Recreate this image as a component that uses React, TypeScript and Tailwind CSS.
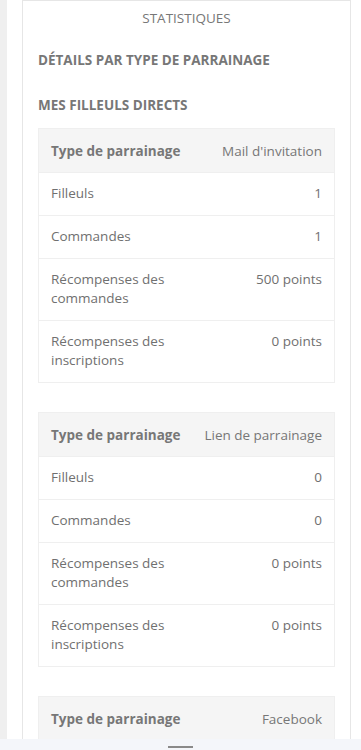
import React from "react";

type Row = { label: string; value: string };
type Table = { type: string; rows: Row[] };

const tables: Table[] = [
  {
    type: "Mail d'invitation",
    rows: [
      { label: "Filleuls", value: "1" },
      { label: "Commandes", value: "1" },
      { label: "Récompenses des commandes", value: "500 points" },
      { label: "Récompenses des inscriptions", value: "0 points" },
    ],
  },
  {
    type: "Lien de parrainage",
    rows: [
      { label: "Filleuls", value: "0" },
      { label: "Commandes", value: "0" },
      { label: "Récompenses des commandes", value: "0 points" },
      { label: "Récompenses des inscriptions", value: "0 points" },
    ],
  },
  {
    type: "Facebook",
    rows: [
      { label: "Filleuls", value: "0" },
      { label: "Commandes", value: "0" },
    ],
  },
];

function StatsTable({ table }: { table: Table }) {
  return (
    <div className="border border-[#efefef]">
      <div className="flex justify-between gap-4 whitespace-nowrap bg-[#f5f5f5] px-3 pt-[12px] pb-[11px] leading-5">
        <div className="font-bold text-[#777]">Type de parrainage</div>
        <div className="text-right text-[#777]">{table.type}</div>
      </div>
      {table.rows.map((row) => (
        <div
          key={row.label}
          className="flex justify-between gap-4 border-t border-[#efefef] px-3 pt-[11px] pb-[12px] leading-[19px]"
        >
          <div className="w-[135px]">{row.label}</div>
          <div className="text-right">{row.value}</div>
        </div>
      ))}
    </div>
  );
}

export default function App() {
  return (
    <div className="relative h-[750px] w-[361px] overflow-hidden bg-white font-['Open_Sans',sans-serif] text-[13.5px] text-[#707070]">
      <div className="flex h-full">
        <div className="w-[7px] shrink-0 bg-[#efefef]" />
        <div className="w-[15px] shrink-0" />
        <div className="w-[329px] shrink-0 border-x border-t border-[#e6e6e6]">
          <div className="py-[9px] text-center text-[13.5px] uppercase leading-[16px] text-[#777]">
            Statistiques
          </div>
          <div className="px-[15px]">
            <h2 className="mt-[17px] text-[13.5px] font-bold uppercase leading-4 text-[#777]">
              Détails par type de parrainage
            </h2>
            <h3 className="mt-[29px] text-[13.5px] font-bold uppercase leading-4 text-[#777]">
              Mes filleuls directs
            </h3>
            <div className="mt-[15px] flex flex-col gap-[29px]">
              {tables.map((t) => (
                <StatsTable key={t.type} table={t} />
              ))}
            </div>
          </div>
        </div>
      </div>
      <div className="absolute inset-x-0 bottom-0 flex h-[11px] justify-center bg-[#f4f6fa] pt-[7px]">
        <div className="h-[2px] w-[25px] bg-[#8a8a8a]" />
      </div>
    </div>
  );
}
